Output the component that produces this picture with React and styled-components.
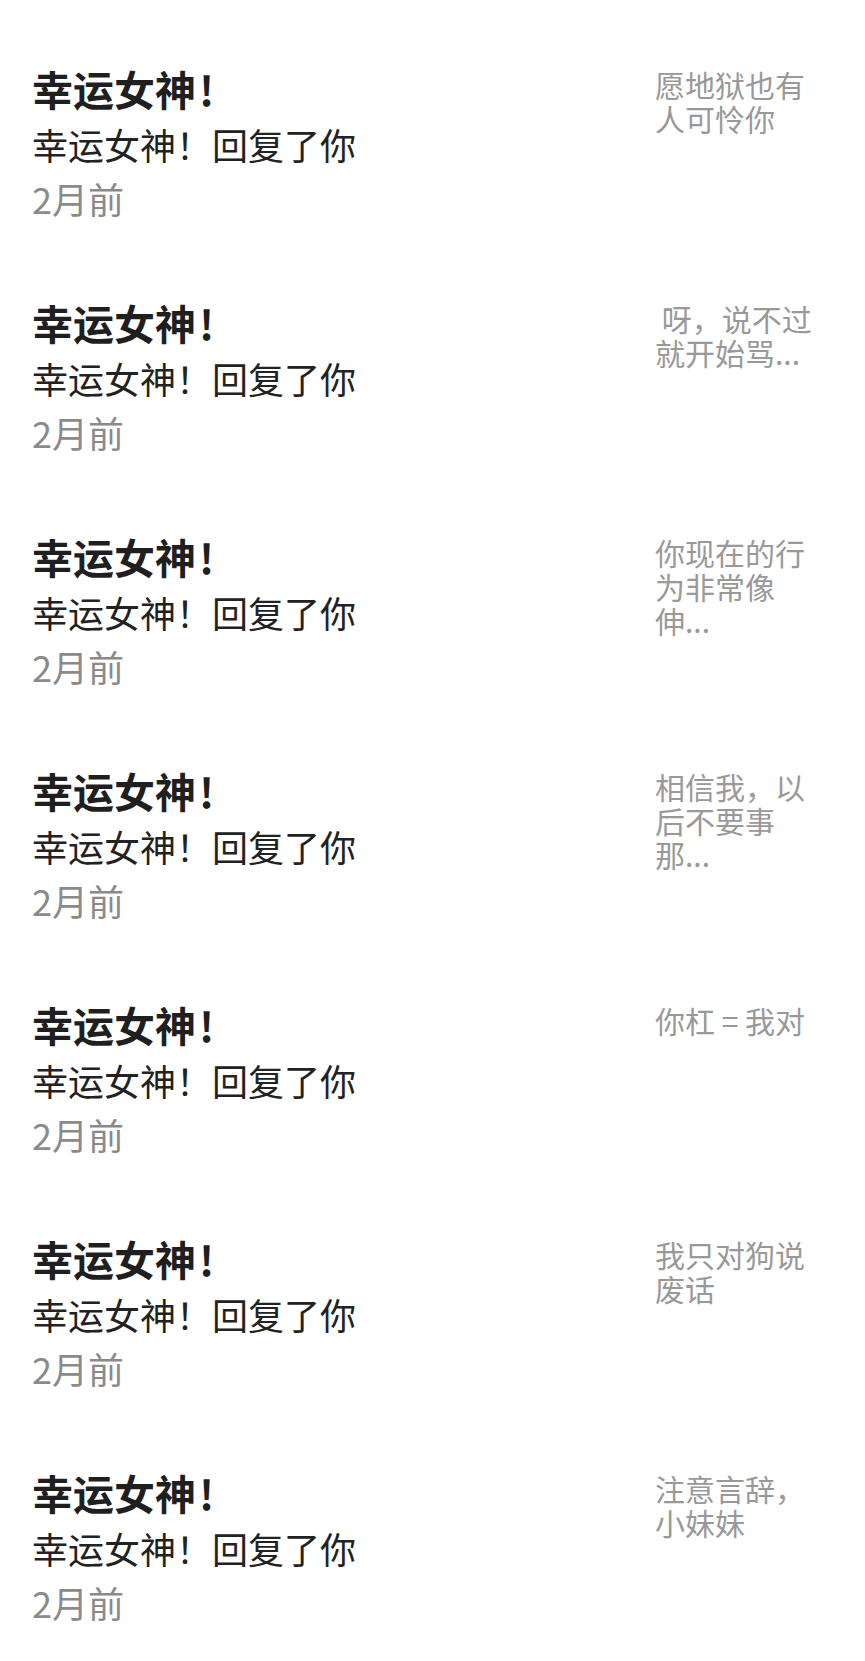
import React from 'react';
import styled, { createGlobalStyle } from 'styled-components';

const GlobalStyle = createGlobalStyle`
  html, body {
    margin: 0;
    padding: 0;
    background: #ffffff;
  }

  body {
    font-family: "Noto Sans CJK SC", "Noto Sans", sans-serif;
    -webkit-font-smoothing: antialiased;
  }
`;

const List = styled.div`
  width: 100%;
  padding-top: 27px;
  display: flex;
  flex-direction: column;
`;

const Item = styled.div`
  display: flex;
  justify-content: space-between;
  align-items: flex-start;
  height: 234px;
  box-sizing: border-box;
  padding: 33px 45px 0 32px;
`;

const Main = styled.div`
  display: flex;
  flex-direction: column;
  min-width: 0;
`;

const Title = styled.div`
  font-size: 41px;
  line-height: 56px;
  font-weight: 700;
  color: #1f1f1f;

  .bang {
    margin-left: 3px;
  }
`;

const Subtitle = styled.div`
  font-size: 36px;
  line-height: 56px;
  color: #222222;
`;

const Time = styled.div`
  font-size: 36px;
  line-height: 52px;
  color: #8a8a8a;
`;

const Quote = styled.div`
  width: 165px;
  flex-shrink: 0;
  margin-top: 7px;
  font-size: 30px;
  line-height: 34px;
  color: #999999;
  white-space: pre-wrap;
  word-break: normal;
`;

const MAX_QUOTE = 10;

const shorten = (text) =>
  text.length > MAX_QUOTE ? `${text.slice(0, MAX_QUOTE)}...` : text;

const notices = [
  { id: 1, quote: '愿地狱也有人可怜你' },
  { id: 2, quote: ' 呀，说不过就开始骂人了' },
  { id: 3, quote: '你现在的行为非常像伸手党' },
  { id: 4, quote: '相信我，以后不要事那么多' },
  { id: 5, quote: '你杠 = 我对' },
  { id: 6, quote: '我只对狗说废话' },
  { id: 7, quote: '注意言辞，小妹妹' },
];

export default function App() {
  return (
    <>
      <GlobalStyle />
      <List>
        {notices.map((notice) => (
          <Item key={notice.id}>
            <Main>
              <Title>
                幸运女神<span className="bang">!</span>
              </Title>
              <Subtitle>幸运女神！回复了你</Subtitle>
              <Time>2月前</Time>
            </Main>
            <Quote>{shorten(notice.quote)}</Quote>
          </Item>
        ))}
      </List>
    </>
  );
}
